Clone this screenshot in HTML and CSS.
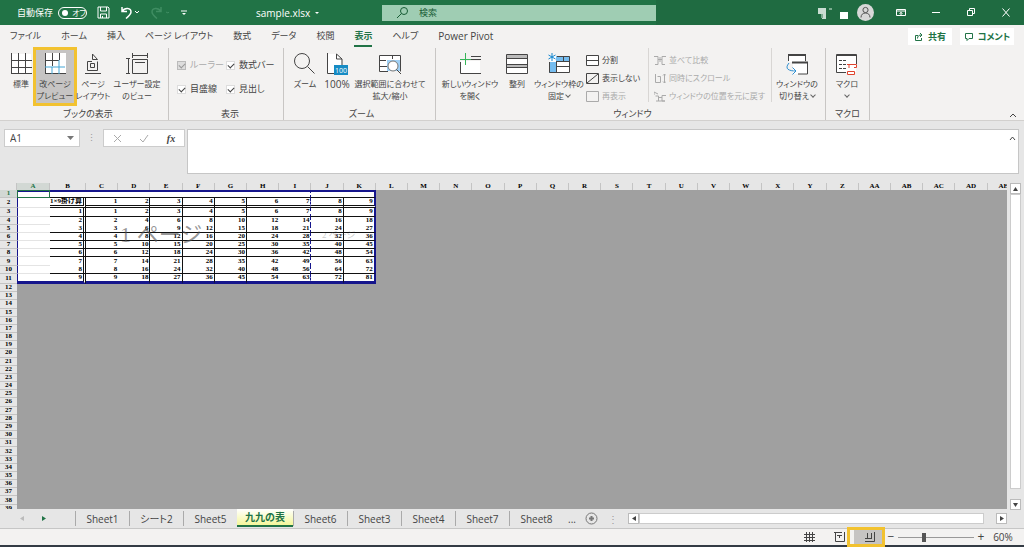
FILE: index.html
```html
<!DOCTYPE html>
<html lang="ja">
<head>
<meta charset="utf-8">
<title>sample.xlsx</title>
<link rel="stylesheet" href="styles.css">
</head>
<body>
<header class="titlebar">
  <div class="title-left">
    <label class="autosave">自動保存 <input type="checkbox" class="switch-input"><span class="switch">オフ</span></label>
    <button class="quick" aria-label="上書き保存"><svg width="13" height="13" viewBox="0 0 13 13"><path d="M1 1h10l1 1v10H1zM3.500 1v4h6V1M3.500 12V8h6v4M5.500 12v-2"/></svg></button>
    <button class="quick undo" aria-label="元に戻す"><svg width="20" height="13" viewBox="0 0 20 13"><path class="thick" d="M2 1v4.500h5M2 5.500C5 1 11 2 11 6c0 2-2 4-5 6.500"/><path d="M15 5l2 2 2-2"/></svg></button>
    <button class="quick redo" aria-label="やり直し"><svg width="20" height="13" viewBox="0 0 20 13"><path class="thick" d="M11 1v4.500H6M11 5.500C8 1 2 2 2 6c0 2 2 4 5 6.500"/><path d="M16 6l2 1 1-1"/></svg></button>
    <button class="quick" aria-label="カスタマイズ"><svg width="8" height="8" viewBox="0 0 8 8"><path d="M1 2h6"/><path class="solid" d="M2 4h4L4 6z"/></svg></button>
  </div>
  <button class="doc-name">sample.xlsx <svg width="6" height="4" viewBox="0 0 6 4"><path class="solid" d="M1 1h4L3 3z"/></svg></button>
  <label class="search"><svg width="13" height="13" viewBox="0 0 13 13"><circle cx="8" cy="5" r="3.500"/><path d="M5.500 7.500L1 12"/></svg><input type="text" aria-label="検索" placeholder="検索"></label>
  <div class="title-right">
    <span class="masked"><svg width="32" height="14" viewBox="0 0 32 14"><path fill="#c9ddd2" d="M1 2h8v11H5V8H1z"/><path fill="#7cac90" d="M12 2h3v2h-3zM4 8h2v4H4z"/><path fill="#fff" d="M23 6h8v7h-8z"/></svg></span>
    <button class="avatar" aria-label="アカウント"><svg width="17" height="17" viewBox="0 0 17 17"><circle cx="8.500" cy="6" r="2.600"/><path d="M4 13.500c0-3 2-4.500 4.500-4.500s4.500 1.500 4.500 4.500"/></svg></button>
    <button class="win" aria-label="リボンの表示オプション"><svg width="10" height="9" viewBox="0 0 10 9"><path d="M.5 1.500h9v6h-9zM.5 3h9M5 7V4.500M3.500 5.500L5 4.500l1.500 1"/></svg></button>
    <button class="win" aria-label="最小化"><svg width="10" height="9" viewBox="0 0 10 9"><path d="M1 4.500h8"/></svg></button>
    <button class="win" aria-label="元のサイズに戻す"><svg width="10" height="9" viewBox="0 0 10 9"><path d="M1.500 2.500h5v5h-5zM3.500 2.500v-2h5v5h-2"/></svg></button>
    <button class="win" aria-label="閉じる"><svg width="10" height="9" viewBox="0 0 10 9"><path d="M1.500.5l7 8M8.500.5l-7 8"/></svg></button>
  </div>
</header>

<nav class="tabs">
  <button>ファイル</button><button>ホーム</button><button>挿入</button><button>ページ レイアウト</button><button>数式</button><button>データ</button><button>校閲</button><button class="current">表示</button><button>ヘルプ</button><button class="latin">Power Pivot</button>
  <span class="spacer"></span>
  <button class="chip share"><svg width="10" height="10" viewBox="0 0 10 10"><path d="M4 3.500H1.500v5h6V6M3.500 6.500C3.500 4 5 3 7.500 3M6 1l2 2-2 2"/></svg>共有</button>
  <button class="chip"><svg width="10" height="10" viewBox="0 0 10 10"><path d="M1.500 1.500h7v5H5l-2 2v-2H1.500z"/></svg>コメント</button>
</nav>

<section class="ribbon">
  <div class="group g-views">
    <div class="tools">
      <button class="tool w26"><svg width="22" height="22" viewBox="0 0 22 22"><path fill="#fff" stroke="none" d="M1 1h20v20H1z"/><path d="M1.500 0v21M8.500 0v21M15.500 0v21M1 7.500h21M1 14.500h21M1 20.500h21"/></svg><span>標準</span></button>
      <button class="tool w42 marked"><svg width="22" height="22" viewBox="0 0 22 22"><path fill="#fff" stroke="none" d="M1 0h21v21H1z"/><path d="M1.500 0v21M8.500 0v13M15.500 0v7M1 7.500h14M1 20.500h21"/><path class="blue" d="M1 14h20M15 7v14M8 14v7"/></svg><span>改ページ<br>プレビュー</span></button>
      <button class="tool w34"><svg width="22" height="22" viewBox="0 0 22 22"><path d="M10 8.500H5.500v9h10v-9M8.500 10.500h4v4h-4zM3 20.500h16M10.500 6.500V1l5 5.500z"/></svg><span>ページ<br>レイアウト</span></button>
      <button class="tool w54"><svg width="22" height="22" viewBox="0 0 22 22"><path d="M6 2.500h16M6.500 0v5M21.500 0v5M0 5.500h4M0 20.500h4M2.500 6v14M6.500 6.500h15v14h-15zM9 9.500h10"/></svg><span>ユーザー設定<br>のビュー</span></button>
    </div>
    <h2>ブックの表示</h2>
  </div>
  <div class="group g-show">
    <div class="checks">
      <label class="off"><input type="checkbox" checked disabled>ルーラー</label>
      <label><input type="checkbox" checked>数式バー</label>
      <label><input type="checkbox" checked>目盛線</label>
      <label><input type="checkbox" checked>見出し</label>
    </div>
    <h2>表示</h2>
  </div>
  <div class="group g-zoom">
    <div class="tools">
      <button class="tool w34"><svg width="24" height="22" viewBox="0 0 24 22"><circle cx="9" cy="8" r="7.500"/><path d="M14.500 13.500l7 7"/></svg><span>ズーム</span></button>
      <button class="tool w30"><svg width="22" height="22" viewBox="0 0 22 22"><path fill="#fff" stroke="none" d="M1.500 1h9l5 5v15h-14z"/><path d="M1.500 0v20.500H8M10.500 1v5h5.500L10.500 1M16 6v6"/><path fill="#168bc4" stroke="none" d="M8 12h14v10H8z"/><text x="9" y="20">100</text></svg><span class="latin">100%</span></button>
      <button class="tool w76"><svg width="24" height="22" viewBox="0 0 24 22"><path fill="#fff" stroke="none" d="M1 2h21v16H1z"/><path fill="#9fd0f5" stroke="none" d="M9 7h13v11H9z"/><path d="M10 18.500H1.500v-16h21v16M1 7.500h7M1 13.500h8M14.500 2v4"/><circle cx="15" cy="13" r="5" fill="#fff" stroke="#777"/><path d="M18.500 16.500L23 21"/></svg><span>選択範囲に合わせて<br>拡大/縮小</span></button>
    </div>
    <h2>ズーム</h2>
  </div>
  <div class="group g-window">
    <div class="tools">
      <button class="tool w60"><svg width="22" height="22" viewBox="0 0 22 22"><path fill="#fff" stroke="none" d="M2 8h19v12H2z"/><path d="M1.500 9v11.500H22M12 3.500h10M12 6.500h10"/><path stroke="#35b558" d="M6.500 0v12M1 6.500h11"/></svg><span>新しいウィンドウ<br>を開く</span></button>
      <button class="tool w34"><svg width="22" height="22" viewBox="0 0 22 22"><path fill="#fff" stroke="none" d="M1 1h20v20H1z"/><path fill="#bbb" stroke="none" d="M1 2h20v3H1zM1 12h20v2H1z"/><path d="M.5 1.500h21v19H.5zM0 5.500h22M0 11.500h22M0 14.500h22"/></svg><span>整列</span></button>
      <button class="tool w50"><svg width="22" height="22" viewBox="0 0 22 22"><path fill="#fff" stroke="none" d="M2 3h20v17H2z"/><path fill="#75bdf0" stroke="none" d="M8 3h14v6H8zM1 9h7v11H1z"/><path d="M9 3.500h12.500v16H1.500V9M8.500 9v11M8 8.500h14M8 13.500h14M15.500 3v6"/><path stroke="#1587d0" d="M4 0v8M.5 2l7 4M7.500 2l-7 4"/></svg><span>ウィンドウ枠の<br>固定 <i class="down"></i></span></button>
      <div class="stack">
        <button><svg width="13" height="11" viewBox="0 0 13 11"><path fill="#fff" d="M.5.5h12v10H.5z"/><path d="M0 5.500h13"/></svg>分割</button>
        <button><svg width="13" height="11" viewBox="0 0 13 11"><path d="M.5.5h12v10H.5zM1 10l11-9"/></svg>表示しない</button>
        <button class="off"><svg width="13" height="11" viewBox="0 0 13 11"><path d="M.5.5h12v10H.5z"/></svg>再表示</button>
      </div>
      <div class="stack compare">
        <button class="off"><svg width="12" height="11" viewBox="0 0 12 11"><path d="M0 1.500h4v8H1M12 1.500H8v8h3M4 4.500h4M6 2v5"/></svg>並べて比較</button>
        <button class="off"><svg width="12" height="11" viewBox="0 0 12 11"><path d="M1.500 1v8.500h5V3.500h-3M10.500 1v9M9 2.500L10.500 1 12 2.500M9 8.500l1.500 1.500L12 8.500"/></svg>同時にスクロール</button>
        <button class="off"><svg width="12" height="11" viewBox="0 0 12 11"><path d="M0 1l4 2M1.500 5h3v5M12 4.500H8V10h3M2 10h9M0 1v3M5 6.500h3"/></svg>ウィンドウの位置を元に戻す</button>
      </div>
      <button class="tool w50"><svg width="24" height="22" viewBox="0 0 24 22"><path fill="#fff" stroke="none" d="M4 3h16v6H4zM8 10h15v11H8z"/><path stroke-width="2" d="M3 2h18M7 9.500h16"/><path d="M3.500 2v6M20.500 2v6M22.500 10v11H13"/><path stroke="#2f8fd0" d="M4 10C-1 16 4 18 11 18M7.500 14.500L11 18l-3.500 3.500"/></svg><span>ウィンドウの<br>切り替え <i class="down"></i></span></button>
    </div>
    <h2>ウィンドウ</h2>
  </div>
  <div class="group g-macro">
    <div class="tools">
      <button class="tool w42"><svg width="24" height="22" viewBox="0 0 24 22"><path fill="#fff" stroke="none" d="M2 1h19v18H2z"/><path d="M21.500 11V1.500h-20v18H11M1 2.500h20"/><path stroke-dasharray="3 1" d="M4 7.500h8M4 11.500h8M4 15.500h8"/><path stroke="#e0442e" fill="#fff" d="M12 11.500h9.500v3H19M12.500 18.500h7v3h-7zM14 12v3"/></svg><span>マクロ<br><i class="down"></i></span></button>
    </div>
    <h2>マクロ</h2>
  </div>
  <button class="collapse" aria-label="リボンを折りたたむ"><svg width="8" height="5" viewBox="0 0 8 5"><path d="M1 4l3-3 3 3"/></svg></button>
</section>

<section class="formula-bar">
  <label class="name-box"><input type="text" value="A1" aria-label="名前ボックス"><svg width="7" height="4" viewBox="0 0 7 4"><path d="M0 0h7L3.500 4z"/></svg></label>
  <span class="dots">⋮</span>
  <div class="fx">
    <button aria-label="キャンセル"><svg width="9" height="9" viewBox="0 0 9 9"><path d="M1 1l7 7M8 1L1 8"/></svg></button>
    <button aria-label="入力"><svg width="10" height="9" viewBox="0 0 10 9"><path d="M1 5l3 3 5-7"/></svg></button>
    <button class="insert-fn" aria-label="関数の挿入">fx</button>
  </div>
  <div class="formula"><textarea aria-label="数式"></textarea><button aria-label="数式バーの折りたたみ"><svg width="7" height="5" viewBox="0 0 7 5"><path d="M1 4l2.500-3L6 4"/></svg></button></div>
</section>

<main class="work">
  <div class="sheet-view">
    <table class="sheet" id="sheet"></table>
    <span class="watermark first">1 ページ</span>
    <span class="watermark second">2 ページ</span>
  </div>
  <div class="vscroll">
    <button aria-label="上へ"><svg width="5" height="4" viewBox="0 0 5 4"><path d="M0 4h5L2.500 0z"/></svg></button>
    <span class="thumb"></span>
    <button aria-label="下へ"><svg width="5" height="4" viewBox="0 0 5 4"><path d="M0 0h5L2.500 4z"/></svg></button>
  </div>
</main>

<div class="sheet-tabs">
  <div class="nav-arrows"><button class="off" aria-label="前のシート"><svg width="4" height="5" viewBox="0 0 4 5"><path d="M4 0v5L0 2.500z"/></svg></button><button aria-label="次のシート"><svg width="4" height="5" viewBox="0 0 4 5"><path d="M0 0v5l4-2.500z"/></svg></button></div>
  <button class="st">Sheet1</button><button class="st">シート2</button><button class="st">Sheet5</button><button class="st active">九九の表</button><button class="st">Sheet6</button><button class="st">Sheet3</button><button class="st">Sheet4</button><button class="st">Sheet7</button><button class="st">Sheet8</button>
  <button class="more">...</button>
  <button class="add" aria-label="新しいシート"><svg width="13" height="13" viewBox="0 0 13 13"><circle cx="6.500" cy="6.500" r="5.500"/><path stroke-width="2" d="M6.500 4v5M4 6.500h5"/></svg></button>
  <span class="dots">⋮</span>
  <div class="hscroll">
    <button aria-label="左へ"><svg width="4" height="5" viewBox="0 0 4 5"><path d="M4 0v5L0 2.500z"/></svg></button>
    <span class="thumb"></span>
    <button aria-label="右へ"><svg width="4" height="5" viewBox="0 0 4 5"><path d="M0 0v5l4-2.500z"/></svg></button>
  </div>
</div>

<footer class="status">
  <button aria-label="標準"><svg width="11" height="10" viewBox="0 0 11 10"><path d="M2.500 0v10M5.500 0v10M8.500 0v10M0 2.500h11M0 5.500h11M0 8.500h11"/></svg></button>
  <button aria-label="ページ レイアウト"><svg width="11" height="10" viewBox="0 0 11 10"><path d="M0 .5h8M1.500 1v8.500h9V0M3 3.500h5M5.500 3v3"/></svg></button>
  <button class="break-view" aria-label="改ページ プレビュー"><svg width="11" height="10" viewBox="0 0 11 10"><path d="M1 9.500h9.500V0M3.500 1v6M7.500 1v6M1 6.500h6.500"/></svg></button>
  <button class="step" aria-label="縮小">−</button>
  <input type="range" class="zoom" min="10" max="190" value="70" aria-label="ズーム">
  <button class="step" aria-label="拡大">+</button>
  <button class="percent">60%</button>
</footer>
<script src="sheet.js"></script>
</body>
</html>
```

FILE: styles.css
```css
* { box-sizing: border-box; }
body {
  margin: 0;
  height: 100vh;
  display: flex;
  flex-direction: column;
  overflow: hidden;
  background: #e6e6e6;
  color: #444;
  font: 9px/12px "Open Sans", "Noto Sans CJK JP", sans-serif;
  font-feature-settings: "palt";
}
button, input, textarea {
  margin: 0;
  padding: 0;
  border: 0;
  background: none;
  color: inherit;
  font: inherit;
  font-feature-settings: inherit;
}
button { white-space: nowrap; }
svg { display: block; flex: none; fill: none; stroke: currentColor; }

/* Title bar */
.titlebar {
  flex: none;
  height: 25px;
  display: flex;
  align-items: center;
  background: #217346;
  color: #fff;
}
.title-left { display: flex; align-items: center; gap: 10px; width: 256px; padding-left: 17px; }
.autosave { display: flex; align-items: center; gap: 5px; position: relative; white-space: nowrap; }
.switch-input { position: absolute; opacity: 0; }
.switch {
  display: flex;
  align-items: center;
  gap: 4px;
  width: 29px;
  height: 12px;
  padding-left: 3px;
  border: 1px solid #fff;
  border-radius: 6px;
  font-size: 8px;
  line-height: 10px;
}
.switch::before { content: ""; flex: none; width: 6px; height: 6px; border-radius: 50%; background: #fff; }
.redo { color: #3f8d62; }
.thick { stroke-width: 1.5; }
.solid { fill: currentColor; stroke: none; }
.doc-name { display: flex; align-items: center; gap: 4px; width: 126px; font-size: 10px; }
.search {
  display: flex;
  align-items: center;
  gap: 10px;
  flex: 1;
  max-width: 274px;
  height: 16px;
  padding-left: 14px;
  background: #9fcdb3;
  color: #175c35;
}
.search input { flex: 1; min-width: 0; }
.search input::placeholder { color: #175c35; opacity: 1; }
.title-right {
  flex: 1;
  align-self: stretch;
  display: flex;
  align-items: center;
  justify-content: flex-end;
  padding-right: 13px;
  background: #1f6b41;
}
.masked svg { stroke: none; }
.avatar { margin: 0 22px 0 8px; border-radius: 50%; background: #d8d8d8; color: #555; }
.win { margin-left: 25px; }
.avatar + .win { margin-left: 0; }

/* Ribbon tabs */
.tabs {
  flex: none;
  height: 23px;
  display: flex;
  align-items: center;
  gap: 20px;
  padding: 0 10px;
  background: #f3f2f1;
}
.tabs button { height: 20px; border-bottom: 2px solid transparent; }
.tabs .current { border-color: #217346; color: #217346; font-weight: bold; }
.latin { font-size: 10px; }
.spacer { flex: 1; }
.tabs .chip {
  display: flex;
  align-items: center;
  justify-content: center;
  gap: 4px;
  width: 54px;
  height: 17px;
  border: 0;
  background: #fff;
  color: #217346;
  font-weight: bold;
}
.tabs .share { width: 44px; margin-right: -12px; }

/* Ribbon */
.ribbon {
  flex: none;
  height: 73px;
  display: flex;
  background: #f3f2f1;
  border-bottom: 1px solid #d2d0ce;
  position: relative;
}
.group { flex: none; display: flex; flex-direction: column; justify-content: space-between; border-right: 1px solid #c8c6c4; }
.group h2 { margin: 0; font: inherit; text-align: center; }
.g-views { width: 169px; padding-left: 8px; }
.g-show { width: 115px; padding-left: 8px; }
.g-zoom { width: 152px; padding-left: 4px; }
.g-window { width: 390px; padding-left: 4px; }
.g-macro { width: 44px; }
.tools { display: flex; align-items: flex-start; height: 57px; font-size: 8px; }
.tool {
  flex: none;
  display: flex;
  flex-direction: column;
  align-items: center;
  justify-content: flex-start;
  gap: 3px;
  height: 57px;
  padding-top: 5px;
}
.w26 { width: 26px; }
.w30 { width: 30px; }
.w34 { width: 34px; }
.w42 { width: 42px; }
.w50 { width: 50px; }
.w54 { width: 54px; }
.w60 { width: 60px; }
.w76 { width: 76px; }
.marked { background: #c6c4c3; outline: 3px solid #f2c230; outline-offset: -2px; }
.blue { stroke: #42a5d5; }
.tool text { fill: #fff; stroke: none; font-size: 7px; }
.down { display: inline-block; width: 4px; height: 4px; border: solid #666; border-width: 0 1px 1px 0; transform: rotate(45deg); vertical-align: 2px; }
.stack { flex: none; display: flex; flex-direction: column; gap: 6px; width: 64px; padding: 6px 0 0 2px; }
.stack button { display: flex; align-items: center; gap: 3px; }
.compare { width: 124px; border-left: 1px solid #d8d6d4; border-right: 1px solid #d8d6d4; padding-left: 5px; }
.off { color: #aaa; }
.checks { display: grid; grid-template-columns: 49px 50px; row-gap: 12px; padding-top: 11px; }
.checks label { display: flex; align-items: center; gap: 4px; white-space: nowrap; }
.checks input { appearance: none; width: 9px; height: 9px; background: #fff; border: 1px solid #ddd; }
.checks input::before { content: ""; display: block; width: 5px; height: 3px; margin: 1px; border: solid #444; border-width: 0 0 1px 1px; transform: rotate(-45deg); }
.checks .off input { background: #ddd; border-color: #bbb; }
.checks .off input::before { border-color: #999; }
.collapse { position: absolute; right: 7px; bottom: 2px; }

/* Formula bar */
.formula-bar { flex: none; height: 62px; display: flex; align-items: flex-start; padding: 8px 5px 9px 4px; }
.name-box { display: flex; align-items: center; width: 76px; height: 18px; padding: 0 5px; background: #fff; border: 1px solid #ccc; font-size: 10px; }
.name-box input { flex: 1; min-width: 0; }
.name-box svg { fill: #777; stroke: none; }
.dots { width: 23px; text-align: center; color: #999; line-height: 18px; }
.fx { display: flex; align-items: center; justify-content: space-around; width: 82px; height: 18px; margin-right: 2px; background: #fff; border: 1px solid #ccc; color: #aaa; }
.insert-fn { color: #444; font: italic bold 10px "Liberation Serif", serif; }
.formula { flex: 1; align-self: stretch; display: flex; align-items: flex-start; background: #fff; border: 1px solid #c6c6c6; }
.formula textarea { flex: 1; align-self: stretch; resize: none; outline: 0; }
.formula button { margin: 6px 2px; }

/* Worksheet */
.work { flex: 1; min-height: 0; display: flex; gap: 3px; padding-right: 2px; }
.sheet-view { flex: 1; min-width: 0; position: relative; overflow: hidden; background: #a0a0a0; }
.sheet { table-layout: fixed; border-spacing: 0; width: calc(100% + 13px); height: calc(100% + 4px); color: #000; font: bold 7px/7px "Liberation Serif", "Noto Sans CJK JP", serif; }
.sheet th, .sheet td { padding: 0; overflow: hidden; white-space: nowrap; }
.sheet th { background: #e6e6e6; font-weight: bold; text-align: center; }
.sheet thead th { height: 7px; border-right: 1px solid #c4c4c4; }
.sheet tbody th { border-bottom: 1px solid #c4c4c4; }
.sheet .picked { background: #d2d8d4; color: #217346; }
.col-head { width: 17px; }
.col-a { width: 33px; }
.col-b { width: 36px; }
.sheet td.page { background: #fff; text-align: right; padding-right: 1px; border: 0 solid #111; }
.sheet td.faint { border-bottom: 1px solid #e4e4e4; }
.sheet td.line { border-bottom-width: 1px; }
.sheet td.edge { border-right-width: 1px; }
.sheet td.double-right { border-right: 3px double #111; }
.sheet td.double-bottom { border-bottom: 3px double #111; }
.sheet td.page-top { border-top: 2px solid #15158c; }
.sheet td.page-left { border-left: 1px solid #15158c; }
.sheet td.page-right { border-right: 2px solid #15158c; }
.sheet td.page-bottom { border-bottom: 3px solid #15158c; }
.sheet td.page-break { border-right: 1px dashed #15158c; }
.sheet td.cursor { outline: 1px solid #217346; outline-offset: -1px; }
.watermark { position: absolute; color: rgba(80, 80, 80, 0.6); font-family: "Liberation Serif", "Noto Sans CJK JP", serif; pointer-events: none; }
.first { left: 120px; top: 40px; font-size: 22px; line-height: 24px; }
.second { left: 322px; top: 46px; font-size: 9px; opacity: 0.5; }
.vscroll { width: 12px; display: flex; flex-direction: column; margin-bottom: -1px; }
.vscroll button, .hscroll button { display: flex; align-items: center; justify-content: center; flex: none; width: 11px; height: 11px; background: #fff; border: 1px solid #bbb; }
.vscroll svg, .hscroll svg, .nav-arrows svg { fill: currentColor; stroke: none; }
.vscroll .thumb { flex: 1; width: 11px; margin-bottom: 10px; background: #fff; border: 1px solid #ccc; }

/* Sheet tabs */
.sheet-tabs { flex: none; height: 20px; display: flex; align-items: center; border-bottom: 1px solid #c6c6c6; font-size: 10px; }
.nav-arrows { display: flex; gap: 18px; width: 75px; padding-left: 20px; color: #217346; }
.nav-arrows .off { color: #bbb; }
.st { width: 54px; height: 15px; border-left: 1px solid #aaa; }
.sheet-tabs .active { width: 56px; height: 18px; align-self: flex-start; background: linear-gradient(#fff, #f4f79a); border: 0; border-bottom: 2px solid #217346; color: #217346; font-weight: bold; }
.more { width: 18px; }
.add { margin: 0 3px 0 4px; color: #777; }
.hscroll { flex: 1; display: flex; align-items: center; margin: 0 17px 0 4px; }
.hscroll .thumb { flex: 1; height: 11px; margin-right: 12px; background: #fff; border: 1px solid #ccc; }

/* Status bar */
.status { flex: none; height: 18px; display: flex; align-items: center; justify-content: flex-end; padding-right: 7px; background: #f3f2f1; border-bottom: 2px solid #333b44; }
.status button { width: 30px; display: flex; justify-content: center; }
.status .break-view { position: relative; align-self: stretch; align-items: center; background: #c6c4c3; }
.break-view::after { content: ""; position: absolute; inset: -2px -1px -2px -7px; border: 3px solid #f2c230; }
.status .step { width: 14px; font-size: 12px; }
.status .percent { width: 28px; margin-left: 1px; font-size: 10px; }
.zoom { appearance: none; width: 76px; height: 12px; background: linear-gradient(#999, #999) center / 100% 1px no-repeat; }
.zoom::-webkit-slider-thumb { appearance: none; width: 4px; height: 9px; background: #555; }
```

FILE: sheet.js
```js
const table = document.getElementById("sheet");
const letters = [..."ABCDEFGHIJKLMNOPQRSTUVWXYZ"].concat(["AA", "AB", "AC", "AD", "AE"]);
const PAGE_COLS = 11;
const PAGE_ROWS = 11;

function make(tag, text, classes) {
  const el = document.createElement(tag);
  el.textContent = text;
  el.className = classes.join(" ");
  return el;
}

const cols = document.createElement("colgroup");
cols.append(make("col", "", ["col-head"]), make("col", "", ["col-a"]), make("col", "", ["col-b"]));
table.append(cols);

const head = table.createTHead().insertRow();
head.append(make("th", "", []));
letters.forEach((name, i) => head.append(make("th", name, i === 0 ? ["picked"] : [])));

function cellText(row, col) {
  if (row < 2 || col < 2) return "";
  if (row === 2) return col === 2 ? "1×9掛け算" : String(col - 2);
  return col === 2 ? String(row - 2) : String((row - 2) * (col - 2));
}

function cellClasses(row, col) {
  const list = ["page"];
  if (row === 1) list.push("page-top");
  if (col > 1) {
    if (row !== 4 && row !== 9) list.push("line");
    if (row > 1 && col !== 3 && col !== 8) list.push("edge");
    if (row === 2) list.push("double-bottom");
    if (col === 2 && row > 1) list.push("double-right");
    if (col === 9) list.push("page-break");
  }
  if (col === 1) list.push("faint", "page-left");
  if (col === PAGE_COLS) list.push("page-right");
  if (row === PAGE_ROWS) list.push("page-bottom");
  if (row === 1 && col === 1) list.push("cursor");
  return list;
}

const body = table.createTBody();
for (let row = 1; row <= 39; row++) {
  const tr = body.insertRow();
  tr.append(make("th", String(row), row === 1 ? ["picked"] : []));
  for (let col = 1; col <= letters.length; col++) {
    const inPage = row <= PAGE_ROWS && col <= PAGE_COLS;
    tr.append(make("td", inPage ? cellText(row, col) : "", inPage ? cellClasses(row, col) : []));
  }
}
```
